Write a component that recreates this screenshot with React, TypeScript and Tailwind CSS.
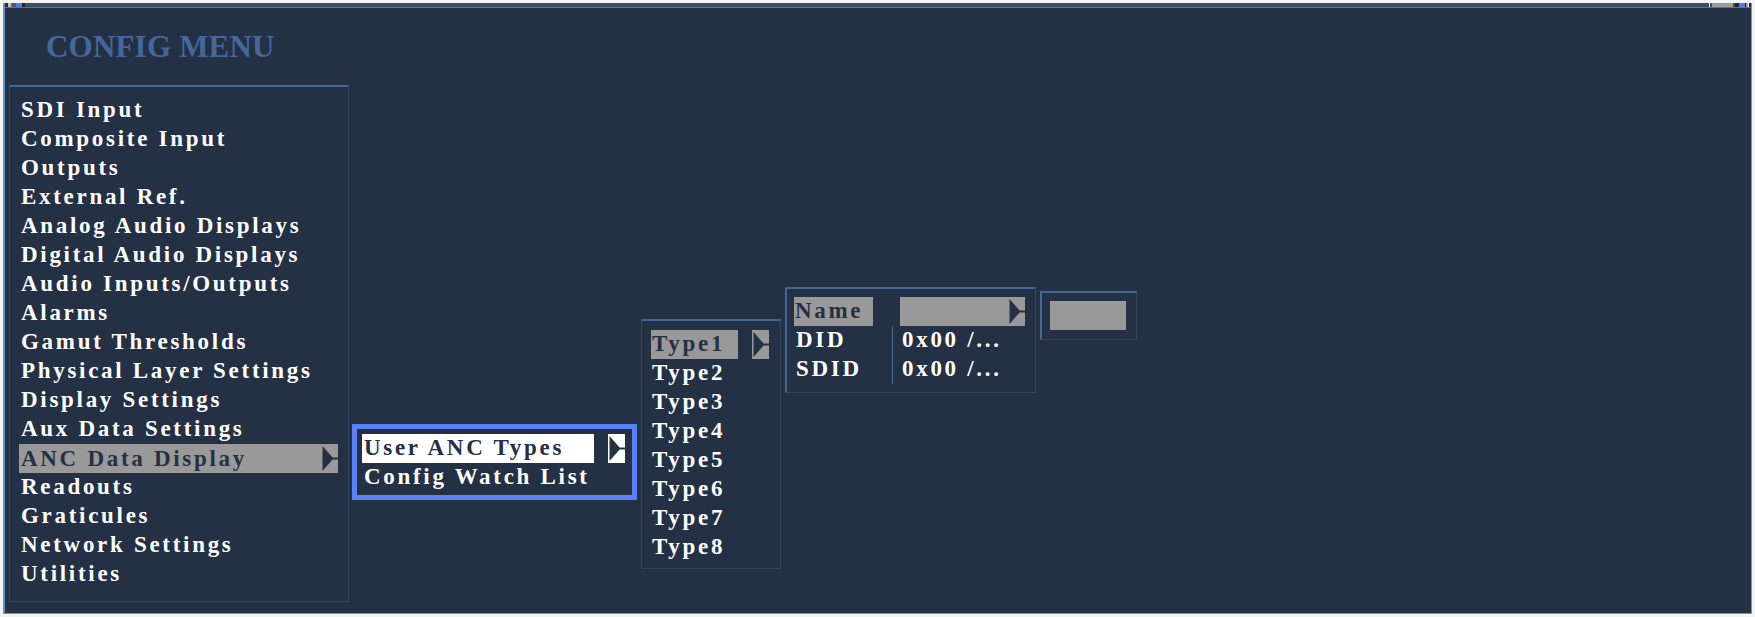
import React from 'react';

const mainItems = [
  'SDI Input',
  'Composite Input',
  'Outputs',
  'External Ref.',
  'Analog Audio Displays',
  'Digital Audio Displays',
  'Audio Inputs/Outputs',
  'Alarms',
  'Gamut Thresholds',
  'Physical Layer Settings',
  'Display Settings',
  'Aux Data Settings',
  'ANC Data Display',
  'Readouts',
  'Graticules',
  'Network Settings',
  'Utilities',
];

const types = ['Type1', 'Type2', 'Type3', 'Type4', 'Type5', 'Type6', 'Type7', 'Type8'];

// little "submenu" pointer drawn by the scope UI
function Arrow({ bg }: { bg: string }) {
  return (
    <span className={`flex h-[29px] w-[17px] shrink-0 ${bg}`}>
      <svg width="17" height="29" viewBox="0 0 17 29">
        <polygon points="1.5,2 12.5,14.5 1.5,27" fill="#243043" />
        <rect x="12" y="13.5" width="5" height="2" fill="#243043" />
      </svg>
    </span>
  );
}

function Row({ children }: { children: React.ReactNode }) {
  return <div className="h-[29px] whitespace-nowrap pl-[2px] leading-[27px]">{children}</div>;
}

export default function App() {
  return (
    <div className="h-[617px] w-[1755px] overflow-hidden bg-[#f3f3f3] pl-[3px] pt-[3px]">
      <div className="flex h-[611px] w-[1749px] flex-col border-b border-l-2 border-r border-b-[#8a929c] border-l-[#6a8fc6] border-r-[#8a929c] bg-[#243043]">
        {/* top status strip */}
        <div className="flex h-[4px] items-stretch bg-[#3b4e68]">
          <span className="w-[3px] bg-[#2b2b2b]" />
          <span className="w-[3px] bg-[#c2c2c2]" />
          <span className="w-[1px] bg-[#6d6d6d]" />
          <span className="w-[4px] bg-[#4a5a70]" />
          <span className="w-[6px] bg-[#4d7df0]" />
          <span className="w-[3px] bg-[#262626]" />
          <span className="flex-1" />
          <span className="w-[1px] bg-white" />
          <span className="w-[2px]" />
          <span className="w-[21px] bg-[#9c9c9c]" />
          <span className="w-[2px]" />
          <span className="w-[4px] bg-[#262626]" />
          <span className="w-[6px] bg-[#4d7df0]" />
          <span className="w-[1px] bg-[#262626]" />
          <span className="w-[2px] bg-[#9c9c9c]" />
          <span className="w-[1px] bg-white" />
          <span className="w-[2px] bg-[#262626]" />
        </div>
        <div className="h-[1px] bg-[#4a72b0]" />

        <div className="flex-1 pl-[4px] font-['Liberation_Serif',serif] text-[23px] font-bold tracking-[2.7px] text-white">
          <div className="ml-[37px] mt-[23px] h-[31px] whitespace-nowrap text-[31px] leading-[31px] tracking-[0.2px] text-[#44689c]">
            CONFIG MENU
          </div>

          <div className="mt-[23px] flex items-start">
            {/* main config menu */}
            <div className="w-[340px] border border-t-2 border-[#34465e] border-t-[#41679b] pb-[12px] pl-[9px] pr-[10px] pt-[9px]">
              {mainItems.map((item) =>
                item === 'ANC Data Display' ? (
                  <div key={item} className="flex h-[29px] items-center justify-between bg-[#999999] pl-[2px] leading-[27px] text-[#243043]">
                    <span className="whitespace-nowrap">{item}</span>
                    <Arrow bg="bg-[#999999]" />
                  </div>
                ) : (
                  <Row key={item}>{item}</Row>
                ),
              )}
            </div>

            {/* ANC data display submenu */}
            <div className="ml-[3px] mt-[339px] w-[285px] border-[5px] border-[#5a81f8] pb-[3px] pl-[5px] pr-[7px] pt-[5px]">
              <div className="flex items-center">
                <div className="h-[29px] w-[232px] whitespace-nowrap bg-white pl-[2px] leading-[27px] text-[#243043]">
                  User ANC Types
                </div>
                <span className="ml-auto">
                  <Arrow bg="bg-white" />
                </span>
              </div>
              <Row>Config Watch List</Row>
            </div>

            {/* user ANC types */}
            <div className="ml-[4px] mt-[234px] w-[140px] border border-t-2 border-[#34465e] border-t-[#41679b] pb-[6px] pl-[9px] pr-[11px] pt-[9px]">
              {types.map((t) =>
                t === 'Type1' ? (
                  <div key={t} className="flex items-center">
                    <div className="h-[29px] w-[87px] bg-[#999999] pl-[1px] leading-[27px] text-[#243043]">{t}</div>
                    <span className="ml-auto">
                      <Arrow bg="bg-[#999999]" />
                    </span>
                  </div>
                ) : (
                  <div key={t} className="h-[29px] pl-[1px] leading-[27px]">
                    {t}
                  </div>
                ),
              )}
            </div>

            {/* type editor */}
            <div className="ml-[4px] mt-[202px] w-[251px] border border-l-2 border-t-2 border-[#34465e] border-l-[#41679b] border-t-[#41679b] pb-[8px] pl-[7px] pr-[10px] pt-[8px]">
              <div className="flex items-center">
                <div className="h-[29px] w-[79px] bg-[#999999] pl-[1px] leading-[27px] text-[#243043]">Name</div>
                <div className="ml-[27px] flex h-[29px] w-[125px] justify-end bg-[#999999]">
                  <Arrow bg="bg-[#999999]" />
                </div>
              </div>
              <div className="flex">
                <div className="w-[98px] pl-[2px] leading-[27px]">
                  <div className="h-[29px]">DID</div>
                  <div className="h-[29px]">SDID</div>
                </div>
                <div className="h-[58px] border-l border-[#41679b] pl-[9px] leading-[27px]">
                  <div className="h-[29px] whitespace-nowrap">0x00 /...</div>
                  <div className="h-[29px] whitespace-nowrap">0x00 /...</div>
                </div>
              </div>
            </div>

            {/* value editor */}
            <div className="ml-[4px] mt-[206px] w-[97px] border border-l-2 border-t-2 border-[#34465e] border-l-[#41679b] border-t-[#41679b] pb-[9px] pl-[8px] pt-[8px]">
              <div className="h-[29px] w-[76px] bg-[#999999]" />
            </div>
          </div>
        </div>
      </div>
    </div>
  );
}
